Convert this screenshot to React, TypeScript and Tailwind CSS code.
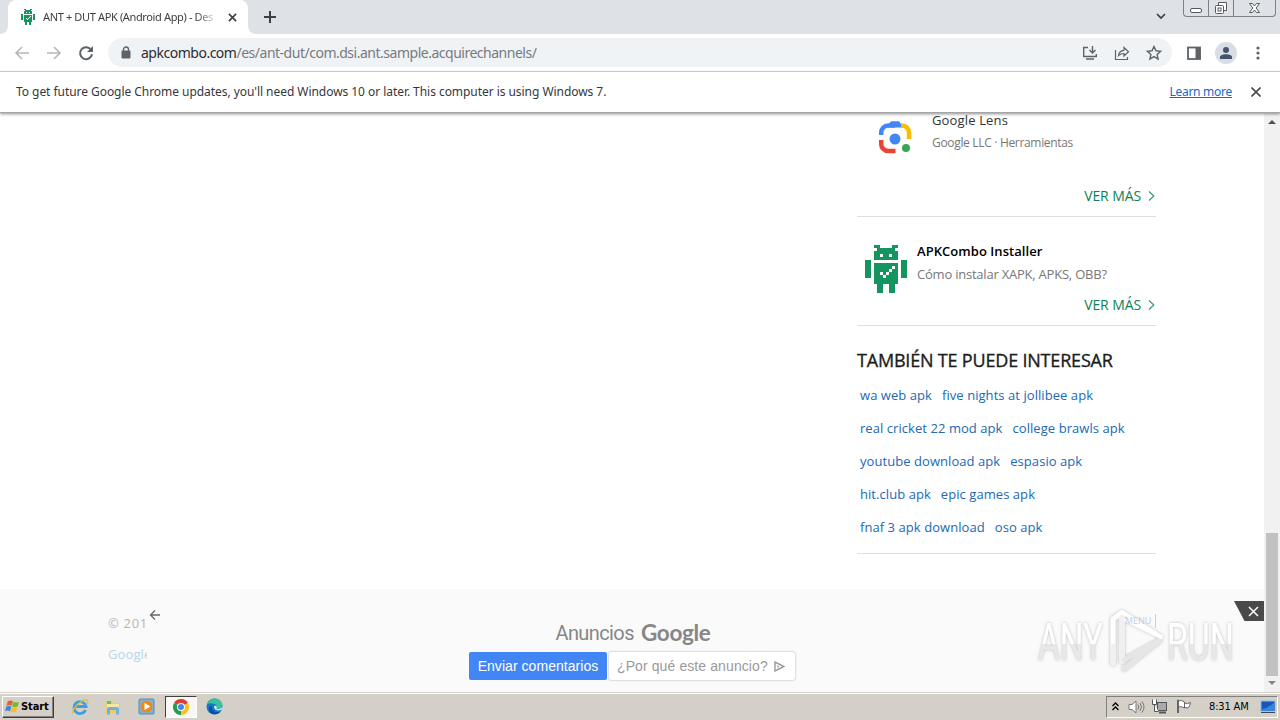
import type { ReactNode } from "react"

const Android = ({ size, className }: { size: number; className?: string }) => {
    // one character per pixel of the mascot
    const rows = [
        "...##....##...",
        "....######....",
        "...########...",
        "...##.##.##...",
        "...########...",
        "##..........##",
        "##.########.##",
        "##.######.#.##",
        "##.#####.##.##",
        "##.##.#.###.##",
        "##.###.####.##",
        "...########...",
        "...########...",
        "....##..##....",
        "....##..##....",
        "....##..##....",
    ]
    return (
        <svg width={size * 14} height={size * 16} viewBox="0 0 14 16" className={className} shapeRendering="crispEdges">
            {rows.map((row, y) =>
                row.split("").map((c, x) => c === "#" && <rect key={`${x}-${y}`} x={x} y={y} width="1" height="1" fill="#14945f" />)
            )}
        </svg>
    )
}

const Icon = ({ children, size = 16, className }: { children: ReactNode; size?: number; className?: string }) => (
    <svg width={size} height={size} viewBox="0 0 16 16" fill="none" stroke="#5f6368" strokeWidth="1.6" className={`shrink-0 ${className ?? ""}`}>
        {children}
    </svg>
)

const TabStrip = () => (
    <div className="flex h-[34px] bg-[#dee1e6]">
        <div className="flex w-2 items-end bg-white">
            <div className="h-full w-full rounded-br-lg bg-[#dee1e6]" />
        </div>
        <div className="bg-[#dee1e6]">
            <div className="flex h-full w-[240px] items-center rounded-t-lg bg-white pl-[13px] pr-[11px]">
                <Android size={1} className="shrink-0" />
                <span className="ml-[8px] w-[175px] overflow-hidden whitespace-nowrap font-['Noto_Sans',sans-serif] text-[11px] tracking-[-0.36px] text-[#3c4043] mask-r-from-88%">
                    ANT + DUT APK (Android App) - Des
                </span>
                <svg width="9" height="9" viewBox="0 0 10 10" className="ml-[10px] shrink-0" stroke="#3c4043" strokeWidth="1.800">
                    <path d="M1 1l8 8M9 1l-8 8" />
                </svg>
            </div>
        </div>
        <div className="flex w-2 items-end bg-white">
            <div className="h-full w-full rounded-bl-lg bg-[#dee1e6]" />
        </div>
        <svg width="12" height="12" viewBox="0 0 12 12" className="ml-2 mt-[11px]" stroke="#3c4043" strokeWidth="2">
            <path d="M6 0v12M0 6h12" />
        </svg>
        <svg width="10" height="7" viewBox="0 0 10 7" className="ml-auto mr-[17px] mt-[13px]" fill="none" stroke="#3c4043" strokeWidth="1.700">
            <path d="M1 1l4 4 4-4" />
        </svg>
        <div className="mr-1 flex h-[17px] w-[93px] rounded-b-[4px] border border-t-0 border-[#7c8087]">
            <svg width="91" height="16" viewBox="0 0 91 16" fill="none" stroke="#55595f">
                <path d="M24.5 0v16M49.5 0v16" stroke="#7c8087" />
                <rect x="6.5" y="8.500" width="11" height="4" rx="1.500" fill="#fff" />
                <path d="M34.500 5V2.500h8v8h-2.500" fill="#fff" />
                <rect x="31.500" y="5.500" width="8" height="8" rx="1" fill="#fff" />
                <rect x="34" y="8" width="3" height="3" />
                <path d="M65.500 3.500h3l2 2.500 2-2.500h3l-3.300 4.500 3.300 4.500h-3l-2-2.500-2 2.500h-3l3.300-4.500z" fill="#fff" />
            </svg>
        </div>
    </div>
)

const Toolbar = () => (
    <div className="flex h-[38px] items-center border-b border-[#d5d7da] bg-white pl-[14px] pr-[14px]">
        <Icon><path d="M15 8H2M8 2L2 8l6 6" stroke="#b5b7ba" /></Icon>
        <Icon className="ml-4"><path d="M1 8h13M8 2l6 6-6 6" stroke="#b5b7ba" /></Icon>
        <Icon className="ml-4">
            <path d="M13.200 5A6 6 0 1 0 14 9.200" strokeWidth="2" />
            <path d="M15 1v6H9z" fill="#5f6368" stroke="none" />
        </Icon>
        <div className="ml-[14px] flex h-[29px] w-[1064px] items-center rounded-full bg-[#f0f3f5] pl-[13px] pr-[10px]">
            <svg width="10" height="13" viewBox="0 0 10 13" fill="none" className="shrink-0">
                <rect x="0.500" y="4.500" width="9" height="8" rx="1" fill="#5f6368" />
                <path d="M2.500 5V3.500a2.500 2.500 0 0 1 5 0V5" stroke="#5f6368" strokeWidth="1.400" />
            </svg>
            <span className="ml-[10px] whitespace-nowrap font-['Noto_Sans',sans-serif] text-[14px] tracking-[-0.49px] text-[#777b80]">
                <span className="text-[#2c2d30]">apkcombo.com</span>/es/ant-dut/com.dsi.ant.sample.acquirechannels/
            </span>
            <Icon className="ml-auto">
                <path d="M6 2.500H1.700v9h12.600V9M4 14h8M10.500 1v6.500M7.500 5l3 3 3-3" strokeWidth="1.400" />
            </Icon>
            <Icon className="ml-4">
                <path d="M1.500 5v9.500h12V12M4.500 10.500c.6-3.500 2.500-5 5.500-5.200V2.500l4.500 4.300-4.500 4.200V8.500c-2.500 0-4 .5-5.500 2z" strokeWidth="1.200" />
            </Icon>
            <Icon className="ml-4">
                <path d="M8 1.500l2 4.300 4.600.5-3.500 3.100 1 4.600L8 11.600 3.900 14l1-4.600L1.400 6.300 6 5.800z" strokeWidth="1.400" />
            </Icon>
        </div>
        <Icon className="ml-[14px]">
            <rect x="2" y="2.500" width="12" height="11.500" strokeWidth="1.800" />
            <path d="M9.500 2h5v12h-5z" fill="#5f6368" stroke="none" />
        </Icon>
        <div className="ml-[13px] flex size-[22px] items-center justify-center rounded-full bg-[#d9dde4]">
            <svg width="12" height="12" viewBox="0 0 12 12" fill="#47536f">
                <circle cx="6" cy="3" r="3" />
                <path d="M0 12V9.800C0 8 3.500 7.200 6 7.200s6 .8 6 2.600V12z" />
            </svg>
        </div>
        <svg width="4" height="14" viewBox="0 0 4 14" fill="#5f6368" className="ml-auto mr-[6px]">
            <circle cx="2" cy="2" r="1.600" />
            <circle cx="2" cy="7" r="1.600" />
            <circle cx="2" cy="12" r="1.600" />
        </svg>
    </div>
)

const InfoBar = () => (
    <div className="z-10 flex h-[41px] items-center border-b border-[#a6a6a6] bg-white pl-4 pr-[19px] font-['Noto_Sans',sans-serif] text-[12px] shadow-[0_1px_3px_rgba(0,0,0,0.45)]">
        <span className="whitespace-nowrap tracking-[-0.05px] text-[#36373a]">
            To get future Google Chrome updates, you'll need Windows 10 or later. This computer is using Windows 7.
        </span>
        <a className="ml-auto whitespace-nowrap tracking-[-0.27px] text-[#1a66c9] underline">Learn more</a>
        <svg width="10" height="10" viewBox="0 0 10 10" className="ml-[19px]" stroke="#4a4d51" strokeWidth="1.700">
            <path d="M.5.500l9 9M9.500.500l-9 9" />
        </svg>
    </div>
)

const MoreLink = () => (
    <div className="flex h-5 items-center justify-end text-[14px] text-[#0d7f56]">
        <span className="-mt-[2px] tracking-[-0.1px]">VER MÁS</span>
        <svg width="7" height="10" viewBox="0 0 7 10" className="ml-[7px] mr-px" fill="none" stroke="#3f9c7a" strokeWidth="1.300">
            <path d="M1 .5L5.800 5 1 9.500" />
        </svg>
    </div>
)

const links = [
    ["wa web apk", "five nights at jollibee apk"],
    ["real cricket 22 mod apk", "college brawls apk"],
    ["youtube download apk", "espasio apk"],
    ["hit.club apk", "epic games apk"],
    ["fnaf 3 apk download", "oso apk"],
]

const Sidebar = () => (
    <aside className="ml-[857px] w-[299px] whitespace-nowrap font-['Open_Sans',sans-serif]">
        <section className="h-[104px] border-b border-[#dfdfdf]">
            <div className="flex h-[73px]">
                <svg width="34" height="34" viewBox="0 0 34 34" className="ml-[21px] mt-[7px]" fill="none" strokeWidth="4.500">
                    <path d="M3.200 15v-2.500a7 7 0 0 1 7-7H17" stroke="#4285f4" />
                    <path d="M9 7.500L12 2.500Q12.700 1.200 14 1.200h6q1.300 0 2 1.300l3 5z" fill="#4285f4" />
                    <path d="M23 5.500h1a7 7 0 0 1 7 7V19" stroke="#fbbc04" />
                    <path d="M3.200 20v4a7 7 0 0 0 7 7H17.500" stroke="#ea4335" />
                    <circle cx="17" cy="19" r="5.500" fill="#4285f4" />
                    <circle cx="28" cy="28" r="4" fill="#34a853" />
                </svg>
                <div className="ml-5">
                    <p className="-mt-[3px] text-[13px] leading-5 tracking-[0.15px] text-[#333]">Google Lens</p>
                    <p className="mt-[3px] text-[12px] leading-5 tracking-[-0.32px] text-[#777]">Google LLC · Herramientas</p>
                </div>
            </div>
            <MoreLink />
        </section>
        <section className="h-[109px] border-b border-[#dfdfdf]">
            <div className="flex h-[78px]">
                <Android size={3} className="ml-2 mt-[28px]" />
                <div className="ml-[10px] mt-6">
                    <p className="text-[13px] font-semibold leading-5 tracking-[0.05px] text-black">APKCombo Installer</p>
                    <p className="mt-[3px] text-[13px] leading-5 tracking-[-0.22px] text-[#777]">Cómo instalar XAPK, APKS, OBB?</p>
                </div>
            </div>
            <MoreLink />
        </section>
        <section className="h-[228px] border-b border-[#dfdfdf] pt-[22px]">
            <h2 className="text-[18px] leading-6 tracking-[-0.19px] text-[#1c1c1c] [-webkit-text-stroke:0.35px]">TAMBIÉN TE PUEDE INTERESAR</h2>
            <div className="mt-[7px] pl-[3px] text-[13px] tracking-[0.06px] text-[#2069b4]">
                {links.map((row) => (
                    <div key={row[0]} className="flex h-[33px] items-center gap-[10px]">
                        {row.map((text) => (
                            <a key={text}>{text}</a>
                        ))}
                    </div>
                ))}
            </div>
        </section>
    </aside>
)

const Footer = () => (
    <footer className="mt-[35px] flex h-[103px] bg-[#fafafa]">
        <div className="ml-[108px] mt-[23px] w-[39px] overflow-hidden whitespace-nowrap font-['Open_Sans',sans-serif] text-[13px] leading-[22px]">
            <p className="tracking-[0.7px] text-[#b5b5b5]">© 201</p>
            <p className="mt-[9px] tracking-[0.1px] text-[#b9d5e8]">Google</p>
        </div>
        <svg width="12" height="12" viewBox="0 0 12 12" className="ml-[2px] mt-[20px]" fill="none" stroke="#666" strokeWidth="1.300">
            <path d="M11 6H1.500M6 1.500L1.500 6 6 10.500" />
        </svg>
        <div className="ml-[308px] mt-[30px] w-[328px] whitespace-nowrap">
            <p className="flex h-7 items-center justify-center text-[#878787]">
                <span className="font-['Roboto',sans-serif] text-[20px] tracking-[-0.6px]">Anuncios</span>
                <span className="ml-[7px] font-['Lato',sans-serif] text-[22.500px] font-bold tracking-[-0.3px]">Google</span>
            </p>
            <div className="mt-[5px] flex gap-[2px] font-['Liberation_Sans',Arial,sans-serif] text-[14px]">
                <button className="h-[28px] w-[138px] rounded-[2px] bg-[#4285f4] tracking-[0.05px] text-white">Enviar comentarios</button>
                <button className="flex h-[28px] w-[186px] items-center rounded-[2px] bg-white pl-2 tracking-[0.1px] text-[#9a9a9a] shadow-[0_0_2px_rgba(0,0,0,0.4)]">
                    ¿Por qué este anuncio?
                    <svg width="11" height="11" viewBox="0 0 11 11" className="ml-[6px]" fill="none" stroke="#999" strokeWidth="1.400">
                        <path d="M1 1v9l9-4.500zM4 4.500v2" />
                    </svg>
                </button>
            </div>
        </div>
    </footer>
)

const Scrollbar = () => (
    <div className="flex w-4 flex-col items-center bg-[#f1f1f1]">
        <svg width="8" height="5" viewBox="0 0 8 5" className="mt-[6px]" fill="#505050"><path d="M0 5l4-4 4 4z" /></svg>
        <div className="mt-auto h-[143px] w-[12px] bg-[#c1c1c1]" />
        <svg width="8" height="5" viewBox="0 0 8 5" className="mb-[6px] mt-[5px]" fill="#8a8a8a"><path d="M0 0l4 4 4-4z" /></svg>
    </div>
)

const Watermark = () => (
    <svg width="210" height="78" viewBox="0 0 210 78" className="absolute left-[1030px] top-[600px]">
        <defs>
            <linearGradient id="metal" x1="0" y1="0" x2="0" y2="1">
                <stop offset="0.520" stopColor="#fff" />
                <stop offset="0.530" stopColor="#e8e8e8" />
            </linearGradient>
            <filter id="soft" x="-10%" y="-10%" width="120%" height="130%">
                <feDropShadow dx="0" dy="0" stdDeviation="1.500" floodColor="#777" floodOpacity="0.500" />
            </filter>
        </defs>
        <g filter="url(#soft)" fill="url(#metal)" fontFamily="Roboto, sans-serif" fontSize="52" fontWeight="400">
            <text x="8" y="60" textLength="65" lengthAdjust="spacingAndGlyphs">ANY</text>
            <text x="137" y="60" textLength="67" lengthAdjust="spacingAndGlyphs">RUN</text>
            <g fill="none" strokeLinejoin="round" strokeLinecap="round">
                <path d="M83 63V19l9-6v48" stroke="#f0f0f0" strokeWidth="6" />
                <path d="M94 69l36-29-36 20" stroke="#e6e6e6" strokeWidth="5" />
                <path d="M83 42V19l9-7 39 25-35-17" stroke="#fff" strokeWidth="4" />
            </g>
        </g>
    </svg>
)

const Start = () => (
    <button className="flex h-[22px] w-[52px] items-center gap-px border border-b-[#404040] border-l-white border-r-[#404040] border-t-white bg-[#d4d0c8] pl-[2px] shadow-[inset_-1px_-1px_0_#808080]">
        <svg width="15" height="15" viewBox="0 0 16 16" className="shrink-0">
            <path d="M3 2.500q3-2 5.500 0L7 7.300q-3-1.500-5.500 0z" fill="#e8622c" />
            <path d="M9 3q3 1.500 6 0l-1.500 5q-3 1.500-6-.3z" fill="#7cb82f" />
            <path d="M1.300 8.300q3-1.600 5.500 0L5.300 13q-3-1.500-5.300 0z" fill="#3b86d8" />
            <path d="M7.200 8.700q3 1.600 6 0L11.800 13.500q-3 1.500-6-.3z" fill="#f5be2a" />
        </svg>
        <span className="mt-[2px] font-['DejaVu_Sans_Condensed','DejaVu_Sans',sans-serif] text-[11px] font-bold tracking-[-0.1px] text-black">Start</span>
    </button>
)

const Taskbar = () => (
    <div className="flex h-[28px] items-center border-t border-[#d4d0c8] bg-[#d4d0c8] pl-[2px] shadow-[inset_0_1px_0_#fff]">
        <Start />
        <svg width="18" height="18" viewBox="0 0 18 18" className="ml-[17px]" fill="none">
            <path d="M14.500 12.200a6 6 0 1 1 .5-3.700H4" stroke="#3ba0dc" strokeWidth="2.800" />
            <path d="M2 15.500C-1 13 10 1 16 2c1.500.5.800 3 0 4" stroke="#e7b93b" strokeWidth="1.300" />
        </svg>
        <svg width="18" height="18" viewBox="0 0 18 18" className="ml-[15px]">
            <path d="M2 3h6l1 2h7v10H2z" fill="#efcc63" />
            <path d="M3 6h12v6H3z" fill="#f8e7a4" />
            <path d="M3 3h4v3H3z" fill="#75b965" />
            <path d="M3 16.500V11q0-2 2-2h8q2 0 2 2v5.500h-3V12H6v4.500z" fill="#6fb3e2" />
        </svg>
        <svg width="18" height="18" viewBox="0 0 18 18" className="ml-[16px]">
            <rect x="1" y="1" width="15" height="15" rx="1" fill="#79b4e1" stroke="#528ebc" />
            <circle cx="8.500" cy="8.500" r="6" fill="#ef8a16" />
            <path d="M6.500 5v7l6-3.500z" fill="#fff" />
        </svg>
        <div className="ml-[9px] flex h-[22px] w-[32px] items-center justify-center border border-b-white border-l-[#404040] border-r-white border-t-[#404040] bg-[#f8f7f6]">
            <svg width="16" height="16" viewBox="0 0 16 16">
                <path d="M8 8L1.070 4A8 8 0 0 1 14.930 4z" fill="#e33b2e" />
                <path d="M8 8l6.930-4A8 8 0 0 1 8 16z" fill="#fbc116" />
                <path d="M8 8v8A8 8 0 0 1 1.070 4z" fill="#299c4a" />
                <circle cx="8" cy="8" r="4" fill="#fff" />
                <circle cx="8" cy="8" r="3" fill="#4285f4" />
            </svg>
        </div>
        <svg width="17" height="17" viewBox="0 0 17 17" className="ml-[9px]">
            <circle cx="8.500" cy="8.500" r="8" fill="#1677c8" />
            <path d="M1 7C2 2 6 .5 9 .5c5 0 7.500 4 7.500 7 0 3-3 4.500-6 3.500 1-1.500.5-4-2-5C5 4.500 2 5 1 7z" fill="#3bbf9c" />
            <path d="M6 8c-1 4 3 7.500 8 6-3 3.500-10 3-11-2-.5-3 1-4.500 3-4z" fill="#0c4f9c" />
            <path d="M8 8.500c0 4 4.500 5 8 3l.5-3c-1 2.500-3.500 3-6 2.500 1-1.500 0-3-1-3.200-.8-.2-1.500 0-1.500.7z" fill="#d4e9e8" />
        </svg>
        <div className="ml-auto mr-[2px] flex h-[22px] w-[172px] items-center border border-b-white border-l-[#808080] border-r-white border-t-[#808080] pl-[5px]">
            <svg width="7" height="9" viewBox="0 0 7 9" fill="none" stroke="#000" strokeWidth="1.300"><path d="M.5 4l3-3 3 3M.5 8l3-3 3 3" /></svg>
            <svg width="17" height="14" viewBox="0 0 17 14" className="ml-[9px]" fill="none" stroke="#777">
                <path d="M1 4.500h3L8 1v12L4 9.500H1z" fill="#fff" />
                <path d="M10 4.500q1.500 2.500 0 5M12 3q3 4 0 8M14 1.500q4 5.500 0 11" strokeWidth="1" />
            </svg>
            <svg width="16" height="15" viewBox="0 0 16 15" className="ml-[7px]" fill="none" stroke="#555">
                <rect x="5.500" y="3.500" width="9" height="8" fill="#aaa" />
                <path d="M7 13.500h7" strokeWidth="2" />
                <path d="M.5.500v5h4v-5M2.500 5.500v7h4" fill="#fff" />
            </svg>
            <svg width="16" height="15" viewBox="0 0 16 15" className="ml-[8px]" fill="#fff" stroke="#666">
                <path d="M1.500 14V1h1v13M2.500 2q3-1.500 6 1v6q-3-2-6-1zM8.500 4q3 1.500 6-.5-.5 4-2.500 5.500l-3.500-.500z" />
            </svg>
            <span className="ml-[17px] mt-[2px] whitespace-nowrap font-['DejaVu_Sans_Condensed','DejaVu_Sans',sans-serif] text-[11px] tracking-[-0.15px] text-black">8:31 AM</span>
            <svg width="16" height="14" viewBox="0 0 16 14" className="ml-auto mr-px">
                <rect x="1" y="1" width="14" height="10" fill="#1756b6" stroke="#8cb9e8" />
                <path d="M1.500 9Q9 8 14.500 2v9h-13z" fill="#3b83d6" />
                <path d="M1 12.500h14" stroke="#37475d" />
            </svg>
        </div>
    </div>
)

export default function App() {
    return (
        <div className="relative flex h-[720px] w-[1280px] flex-col overflow-hidden bg-white">
            <TabStrip />
            <Toolbar />
            <InfoBar />
            <div className="flex h-[579px]">
                <main className="w-[1264px] overflow-hidden">
                    <Sidebar />
                    <Footer />
                </main>
                <Scrollbar />
            </div>
            <Taskbar />
            <Watermark />
            <span className="absolute left-[1125px] top-[614px] w-[31px] border-r border-[#c9cfe4] font-['Open_Sans',sans-serif] text-[9px] leading-[14px] text-[#c3cbe3]">MENU</span>
            <div className="absolute left-[1234px] top-[601px] flex h-5 w-[30px] items-center justify-end bg-[#4a4a4a] pr-[5px] [clip-path:polygon(0_0,100%_0,100%_100%,35%_100%)]">
                <svg width="11" height="11" viewBox="0 0 11 11" stroke="#fff" strokeWidth="1.500"><path d="M1 1l9 9M10 1l-9 9" /></svg>
            </div>
        </div>
    )
}
